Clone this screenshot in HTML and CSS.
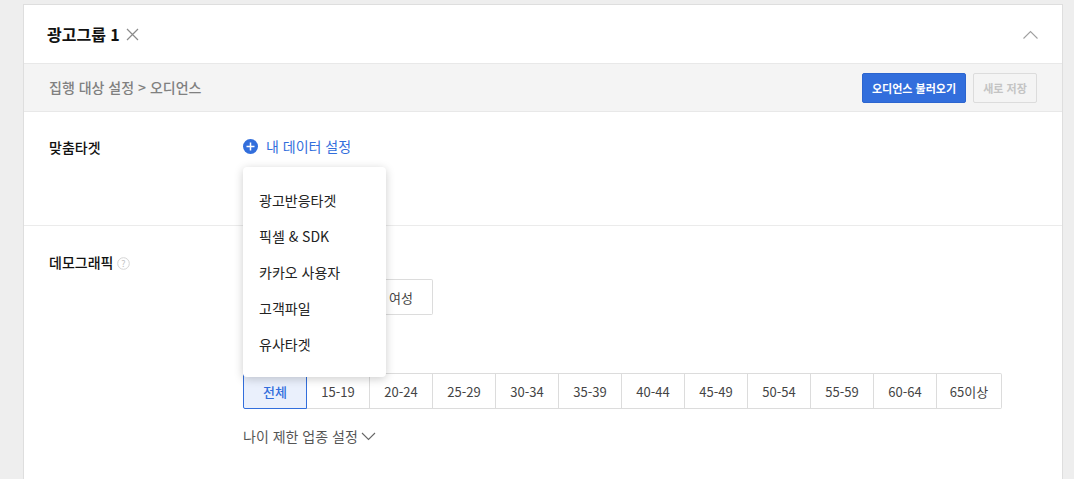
FILE: index.html
```html
<!DOCTYPE html>
<html lang="ko">
<head>
    <meta charset="UTF-8">
    <title>광고그룹</title>
    <link rel="stylesheet" href="styles.css">
</head>
<body>
    <div class="card">
        <div class="card-head">
            <div class="group-name">
                <strong>광고그룹 1</strong>
                <svg class="icon-close" width="13" height="13" viewBox="0 0 13 13"><path d="M1 1l11 11M12 1L1 12" stroke="#8a8a8a" stroke-width="1.2" fill="none"/></svg>
            </div>
            <svg class="icon-fold" width="15" height="9" viewBox="0 0 15 9"><path d="M.5 8.5l7-7 7 7" stroke="#a0a0a0" stroke-width="1.1" fill="none"/></svg>
        </div>

        <div class="sub-bar">
            <span class="crumb">집행 대상 설정 &gt; 오디언스</span>
            <div class="sub-actions">
                <button class="btn btn-primary">오디언스 불러오기</button>
                <button class="btn btn-disabled">새로 저장</button>
            </div>
        </div>

        <div class="section section-target">
            <div class="section-label">맞춤타겟</div>
            <div class="section-body">
                <a class="add-link">
                    <svg width="15" height="15" viewBox="0 0 15 15"><circle cx="7.5" cy="7.5" r="7.5" fill="#326edc"/><path d="M7.5 3.5v8M3.5 7.5h8" stroke="#fff" stroke-width="1.5"/></svg>
                    <span class="add-text">내 데이터 설정</span>
                </a>
                <ul class="menu">
                    <li>광고반응타겟</li>
                    <li>픽셀 &amp; SDK</li>
                    <li>카카오 사용자</li>
                    <li>고객파일</li>
                    <li>유사타겟</li>
                </ul>
            </div>
        </div>

        <div class="section section-demo">
            <div class="section-label">
                데모그래픽
                <svg class="icon-help" width="13" height="13" viewBox="0 0 13 13"><circle cx="6.5" cy="6.5" r="5.8" fill="none" stroke="#d4d4d4"/><text x="6.5" y="9.6" text-anchor="middle" class="help-mark">?</text></svg>
            </div>
            <div class="section-body">
                <div class="seg seg-gender">
                    <button class="seg-item">전체</button>
                    <button class="seg-item">남성</button>
                    <button class="seg-item">여성</button>
                </div>
                <div class="seg seg-age">
                    <button class="seg-item on">전체</button>
                    <button class="seg-item">15-19</button>
                    <button class="seg-item">20-24</button>
                    <button class="seg-item">25-29</button>
                    <button class="seg-item">30-34</button>
                    <button class="seg-item">35-39</button>
                    <button class="seg-item">40-44</button>
                    <button class="seg-item">45-49</button>
                    <button class="seg-item">50-54</button>
                    <button class="seg-item">55-59</button>
                    <button class="seg-item">60-64</button>
                    <button class="seg-item">65이상</button>
                </div>
                <a class="age-limit">
                    나이 제한 업종 설정
                    <svg width="15" height="9" viewBox="0 0 15 9"><path d="M1 1l6.5 6.5L14 1" stroke="#666" stroke-width="1.1" fill="none"/></svg>
                </a>
            </div>
        </div>
    </div>
</body>
</html>
```

FILE: styles.css
```css
html, body {
    height: 479px;
    overflow: hidden;
}
body {
    margin: 0;
    padding: 4px 11px 0 23px;
    background-color: #eeeeee;
    font-family: "Noto Sans CJK KR", "Noto Sans", sans-serif;
    font-size: 14px;
    color: #222;
}
.card {
    height: 480px;
    background-color: #fff;
    border: 1px solid #dedede;
    border-bottom: none;
}
.card-head {
    display: flex;
    justify-content: space-between;
    align-items: center;
    height: 58px;
    padding: 0 24px 0 23px;
    border-bottom: 1px solid #e8e8e8;
}
.group-name {
    display: flex;
    align-items: center;
    gap: 6px;
}
.group-name strong {
    font-size: 16px;
    font-weight: 700;
    color: #111;
}
.icon-close {
    margin-top: 1px;
}
.sub-bar {
    display: flex;
    justify-content: space-between;
    align-items: center;
    height: 47px;
    padding: 0 25px;
    background-color: #f4f4f4;
    border-bottom: 1px solid #e8e8e8;
}
.crumb {
    margin-top: -2px;
    font-weight: 500;
    color: #808080;
}
.sub-actions {
    display: flex;
    gap: 7px;
}
.btn {
    height: 30px;
    padding: 0;
    border-radius: 2px;
    font-family: inherit;
    font-size: 11px;
    font-weight: 700;
}
.btn-primary {
    width: 104px;
    background-color: #326edc;
    border: 1px solid #2c65cf;
    color: #fff;
}
.btn-disabled {
    width: 64px;
    background-color: #f4f4f4;
    border: 1px solid #dcdcdc;
    color: #c4c4c4;
}
.section {
    display: flex;
    border-bottom: 1px solid #ebebeb;
}
.section-label {
    width: 194px;
    margin-top: -1px;
    padding-left: 25px;
    font-weight: 500;
    color: #111;
    line-height: 20px;
}
.section-target {
    height: 114px;
    padding-top: 26px;
    box-sizing: border-box;
}
.section-body {
    position: relative;
    flex: 1;
}
.add-link {
    display: flex;
    align-items: center;
    gap: 8px;
    height: 15px;
    margin-top: 1px;
    color: #326edc;
}
.add-text {
    margin-top: -2px;
}
.menu {
    position: absolute;
    top: 29px;
    left: 0;
    z-index: 5;
    width: 143px;
    height: 210px;
    box-sizing: border-box;
    margin: 0;
    padding: 15px 0;
    list-style: none;
    background-color: #fff;
    border-radius: 4px;
    box-shadow: 0 2px 10px rgba(0, 0, 0, 0.2);
}
.menu li {
    height: 36px;
    padding-left: 16px;
    line-height: 36px;
    color: #222;
}
.section-demo {
    padding-top: 28px;
    border-bottom: none;
}
.section-demo .section-label {
    margin-top: -2px;
}
.icon-help {
    vertical-align: -2px;
}
.help-mark {
    font-size: 9px;
    font-weight: 400;
    fill: #c4c4c4;
}
.seg {
    display: flex;
}
.seg-gender {
    margin-top: 25px;
}
.seg-age {
    margin-top: 58px;
}
.seg-item {
    width: 63px;
    height: 36px;
    padding: 0;
    box-sizing: border-box;
    background-color: #fff;
    border: 1px solid #dcdcdc;
    border-left: none;
    font-family: inherit;
    font-size: 13px;
    color: #444;
}
.seg-item:first-child {
    width: 64px;
    border-left: 1px solid #dcdcdc;
    border-radius: 2px 0 0 2px;
}
.seg-item:last-child {
    border-radius: 0 2px 2px 0;
}
.seg-age .seg-item:last-child {
    width: 65px;
}
.seg-item.on {
    background-color: #eaf0fc;
    border: 1px solid #326edc;
    color: #326edc;
    font-weight: 500;
}
.age-limit {
    display: flex;
    align-items: center;
    gap: 3px;
    margin-top: 17px;
    line-height: 20px;
    color: #555;
}
```
